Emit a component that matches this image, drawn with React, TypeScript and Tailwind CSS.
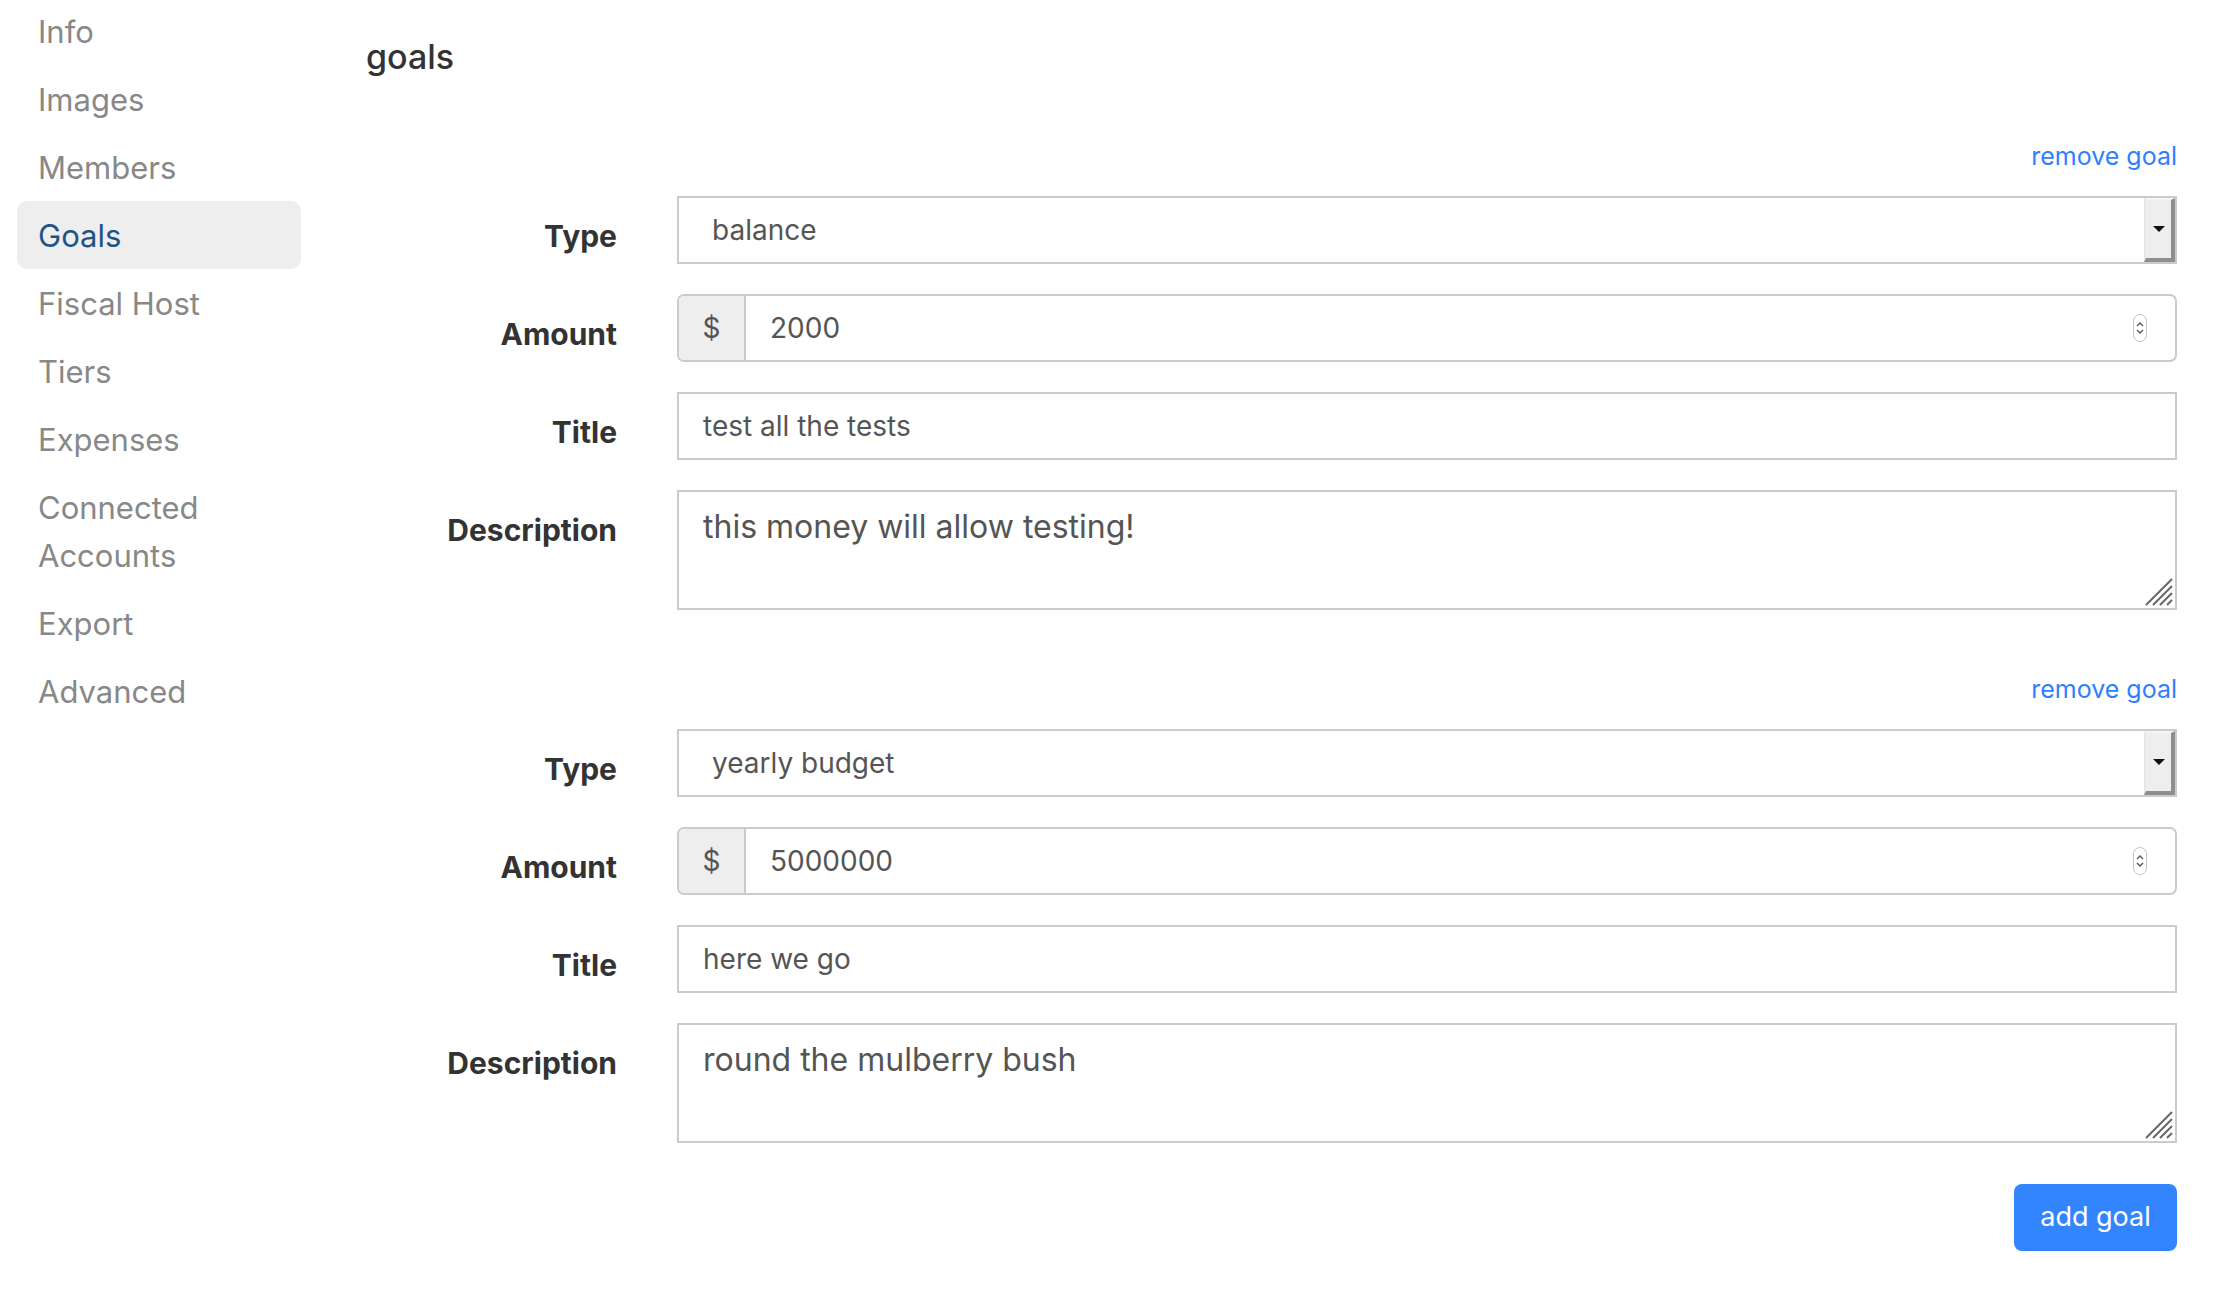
import React from 'react';

type Goal = {
  type: string;
  amount: string;
  title: string;
  description: string;
};

const navItems = [
  'Info',
  'Images',
  'Members',
  'Goals',
  'Fiscal Host',
  'Tiers',
  'Expenses',
  'Connected Accounts',
  'Export',
  'Advanced',
];

const goals: Goal[] = [
  { type: 'balance', amount: '2000', title: 'test all the tests', description: 'this money will allow testing!' },
  { type: 'yearly budget', amount: '5000000', title: 'here we go', description: 'round the mulberry bush' },
];

function Label({ children }: { children: React.ReactNode }) {
  return (
    <div className="w-[251px] shrink-0 text-right font-bold text-[30px] leading-[48px] pt-[16px] text-[#333]">
      {children}
    </div>
  );
}

function SelectBox({ value }: { value: string }) {
  return (
    <div className="flex-1 h-[68px] border-2 border-[#cbcbcb] flex items-center bg-white">
      <span className="flex-1 pl-[33px] text-[28px] text-[#555]">{value}</span>
      <div className="w-[31px] h-[64px] bg-[#eee] border-t-2 border-l-2 border-t-[#f5f5f5] border-l-[#e6e6e6] border-r-[4px] border-b-[4px] border-r-[#8e8e8e] border-b-[#8e8e8e] flex items-center justify-center">
        <svg width="12" height="8" viewBox="0 0 12 8">
          <path d="M0 1 L12 1 L6 7 Z" fill="#111" />
        </svg>
      </div>
    </div>
  );
}

function AmountBox({ value }: { value: string }) {
  return (
    <div className="flex-1 h-[68px] border-2 border-[#cbcbcb] rounded-[7px] flex overflow-hidden bg-white">
      <div className="w-[67px] shrink-0 bg-[#eee] border-r-2 border-[#cbcbcb] flex items-center justify-center text-[28px] text-[#555]">
        $
      </div>
      <span className="flex-1 pl-[24px] flex items-center text-[28px] text-[#555]">{value}</span>
      <div className="flex items-center mr-[28px]">
        <div className="w-[14px] h-[28px] rounded-full border border-[#c4c4c4] flex items-center justify-center">
          <svg width="10" height="18" viewBox="0 0 10 18" fill="none" stroke="#555" strokeWidth="1.4">
            <path d="M2 7 L5 4 L8 7" />
            <path d="M2 11 L5 14 L8 11" />
          </svg>
        </div>
      </div>
    </div>
  );
}

function TextBox({ value }: { value: string }) {
  return (
    <div className="flex-1 h-[68px] border-2 border-[#cbcbcb] flex items-center pl-[24px] text-[28px] text-[#555] bg-white">
      {value}
    </div>
  );
}

function TextArea({ value }: { value: string }) {
  return (
    <div className="flex-1 relative h-[120px] border-2 border-[#cbcbcb] px-[24px] pt-[13px] text-[32px] leading-[44px] text-[#555] bg-white">
      {value}
      <svg className="absolute right-[2px] bottom-[2px]" width="28" height="28" viewBox="0 0 28 28" stroke="#666" strokeWidth="2">
        <path d="M27 1 L1 27" />
        <path d="M27 8 L8 27" />
        <path d="M27 15 L15 27" />
        <path d="M27 22 L22 27" />
      </svg>
    </div>
  );
}

function GoalForm({ goal, first }: { goal: Goal; first: boolean }) {
  return (
    <div className={first ? 'mt-[62px]' : 'mt-[63px]'}>
      <div className="text-right text-[25px] leading-[32px] text-[#2f80ff] mb-[24px]">
        <a href="#">remove goal</a>
      </div>
      <div className="flex flex-col gap-[30px]">
        <div className="flex gap-[60px]">
          <Label>Type</Label>
          <SelectBox value={goal.type} />
        </div>
        <div className="flex gap-[60px]">
          <Label>Amount</Label>
          <AmountBox value={goal.amount} />
        </div>
        <div className="flex gap-[60px]">
          <Label>Title</Label>
          <TextBox value={goal.title} />
        </div>
        <div className="flex gap-[60px]">
          <Label>Description</Label>
          <TextArea value={goal.description} />
        </div>
      </div>
    </div>
  );
}

export default function App() {
  return (
    <div className="min-h-screen w-full bg-white flex font-['Inter',sans-serif]">
      <nav className="w-[301px] shrink-0 pl-[17px] -mt-[3px]">
        {navItems.map((item) =>
          item === 'Goals' ? (
            <div key={item} className="rounded-[10px] bg-[#eee] px-[21px] pt-[11px] pb-[9px] text-[31px] leading-[48px] text-[#1f5585]">
              {item}
            </div>
          ) : (
            <div key={item} className="rounded-[10px] px-[21px] pt-[11px] pb-[9px] text-[31px] leading-[48px] text-[#888]">
              {item}
            </div>
          )
        )}
      </nav>

      <main className="flex-1 pl-[65px] pr-[47px]">
        <h2 className="mt-[36px] text-[34px] leading-[42px] font-medium text-[#333]">goals</h2>
        {goals.map((g, i) => (
          <GoalForm key={i} goal={g} first={i === 0} />
        ))}
        <div className="flex justify-end mt-[41px]">
          <button className="w-[163px] h-[67px] rounded-[8px] bg-[#3385ff] text-white text-[27px]">
            add goal
          </button>
        </div>
      </main>
    </div>
  );
}
